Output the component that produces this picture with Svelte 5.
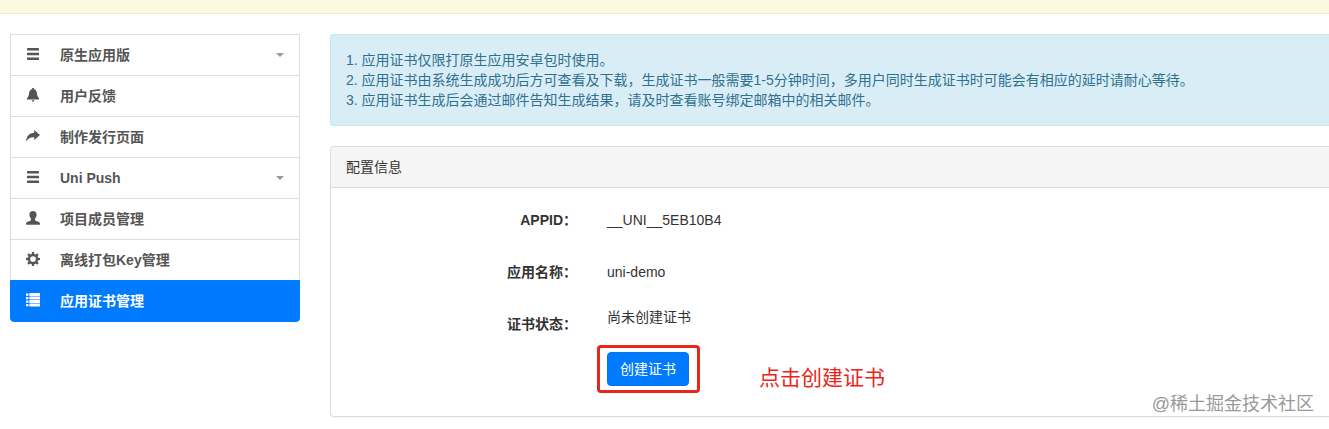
<script lang="ts">
  const menu = [
    { label: "原生应用版", icon: "bars", sub: true },
    { label: "用户反馈", icon: "bell" },
    { label: "制作发行页面", icon: "share" },
    { label: "Uni Push", icon: "bars", sub: true },
    { label: "项目成员管理", icon: "user" },
    { label: "离线打包Key管理", icon: "cog" },
    { label: "应用证书管理", icon: "list" },
  ];

  const notes = [
    "1. 应用证书仅限打原生应用安卓包时使用。",
    "2. 应用证书由系统生成成功后方可查看及下载，生成证书一般需要1-5分钟时间，多用户同时生成证书时可能会有相应的延时请耐心等待。",
    "3. 应用证书生成后会通过邮件告知生成结果，请及时查看账号绑定邮箱中的相关邮件。",
  ];

  let active = $state("应用证书管理");
</script>

{#snippet icon(name: string)}
  <svg class="icon" viewBox="0 0 14 14" aria-hidden="true">
    {#if name === "bars"}
      {#each [1, 5.7, 10.4] as y}
        <rect x="1" {y} width="12" height="2.6" rx="0.4" />
      {/each}
    {:else if name === "bell"}
      <path d="M7 0c.7 0 1.1.5 1.100 1.200C9.900 1.700 10.800 3.200 10.900 5c.1 2.200.6 3.600 2.100 5.200V11.500H1v-1.300C2.500 8.600 3 7.200 3.100 5c.1-1.800 1-3.300 2.800-3.800C5.900.5 6.300 0 7 0zM5.600 12.300h2.800c-.1.900-.7 1.500-1.400 1.500s-1.300-.6-1.400-1.500z" />
    {:else if name === "share"}
      <path d="M8.200 1 14 6 8.200 11.100V8.200C4.400 8.100 2.100 9 .1 12.400.3 7.400 3.300 4.200 8.200 3.800z" />
    {:else if name === "user"}
      <path d="M7 0c2.200 0 3.600 1.300 3.600 3.600 0 1.500-.5 2.900-1.500 3.900v1.400c0 .4.2.6.5.8l3.300 1.300c.7.3 1 .8 1 1.400v.8c0 .4-.2.6-.6.6H.7c-.4 0-.6-.2-.6-.6v-.8c0-.6.3-1.100 1-1.400l3.300-1.300c.3-.2.5-.4.5-.8V7.500c-1-1-1.500-2.400-1.500-3.900C3.400 1.300 4.800 0 7 0z" />
    {:else if name === "cog"}
      <circle cx="7" cy="7" r="4" fill="none" stroke="currentColor" stroke-width="2.3" />
      {#each [0, 45, 90, 135, 180, 225, 270, 315] as angle}
        <path d="M5.600 2.700 6 0h2l.4 2.700z" transform="rotate({angle} 7 7)" />
      {/each}
    {:else}
      {#each [0, 3.5, 7, 10.5] as y}
        <path d="M0 {y + 0.4}h2.500v2.300H0zM3.400 {y + 0.1}H14v2.800H3.400z" />
      {/each}
    {/if}
  </svg>
{/snippet}

<div class="topbar"></div>

<div class="page">
  <nav class="sidebar">
    {#each menu as item}
      <a
        href="#{item.icon}"
        class:active={item.label === active}
        onclick={(e) => {
          e.preventDefault();
          active = item.label;
        }}
      >
        {@render icon(item.icon)}
        <span>{item.label}</span>
        {#if item.sub}<i class="caret"></i>{/if}
      </a>
    {/each}
  </nav>

  <main>
    <div class="alert">
      {#each notes as note}
        <p>{note}</p>
      {/each}
    </div>

    <section class="panel">
      <h3>配置信息</h3>
      <dl>
        <dt>APPID：</dt>
        <dd class="static">__UNI__5EB10B4</dd>
        <dt>应用名称：</dt>
        <dd class="static">uni-demo</dd>
        <dt>证书状态：</dt>
        <dd>
          <div>尚未创建证书</div>
          <div class="action">
            <button type="button">创建证书</button>
            <span class="frame"></span>
            <span class="hint">点击创建证书</span>
          </div>
        </dd>
      </dl>
    </section>
  </main>
</div>

<div class="watermark">@稀土掘金技术社区</div>

<style>
  :global(body) {
    margin: 0;
    background: #fff;
    color: #333;
    font-family: "Liberation Sans", "Noto Sans CJK SC", sans-serif;
    font-size: 14px;
    line-height: 20px;
  }
  :global(#app) {
    position: relative;
    overflow: hidden;
  }
  .topbar {
    height: 13px;
    background: #fcf8e0;
    border-bottom: 1px solid #eeebcf;
  }
  .page {
    display: flex;
    align-items: flex-start;
    gap: 30px;
    padding: 20px 0 12px 10px;
  }

  .sidebar {
    flex: 0 0 290px;
  }
  .sidebar a {
    display: flex;
    align-items: center;
    padding: 10px 15px;
    margin-bottom: -1px;
    border: 1px solid #ddd;
    color: #555;
    font-weight: bold;
    text-decoration: none;
  }
  .sidebar a:last-child {
    margin-bottom: 0;
    border-radius: 0 0 4px 4px;
  }
  .sidebar a.active {
    position: relative;
    background: #007bff;
    border-color: #007bff;
    color: #fff;
  }
  .icon {
    width: 14px;
    height: 14px;
    margin: 0 20px 2px 0;
    fill: currentColor;
  }
  .caret {
    margin-left: auto;
    border: 4px solid transparent;
    border-top-color: #999;
    border-bottom: 0;
  }

  main {
    flex: 1;
    min-width: 0;
  }
  .alert {
    padding: 15px;
    margin-bottom: 20px;
    border: 1px solid #bce8f1;
    border-right: 0;
    border-radius: 4px 0 0 4px;
    background: #d9edf7;
    color: #31708f;
  }
  .alert p {
    margin: 0;
  }
  .panel {
    border: 1px solid #ddd;
    border-right: 0;
    border-radius: 4px 0 0 4px;
    box-shadow: 0 1px 1px rgba(0, 0, 0, 0.05);
  }
  .panel h3 {
    margin: 0;
    padding: 10px 15px;
    border-bottom: 1px solid #ddd;
    border-radius: 3px 0 0 0;
    background: #f5f5f5;
    font-size: 14px;
    font-weight: normal;
  }
  dl {
    display: grid;
    grid-template-columns: 246px 1fr;
    gap: 15px 30px;
    margin: 0;
    padding: 15px 15px 30px 0;
  }
  dt {
    padding-top: 7px;
    font-weight: bold;
    text-align: right;
  }
  dd {
    margin: 0;
  }
  .static {
    padding: 7px 0 10px;
  }
  .action {
    position: relative;
    width: max-content;
    margin-top: 25px;
  }
  button {
    display: block;
    padding: 6px 12px;
    border: 1px solid #0a74e6;
    border-radius: 4px;
    background: #007bff;
    color: #fff;
    font: inherit;
    cursor: pointer;
  }
  button:hover {
    background: #0069d9;
  }
  .frame {
    position: absolute;
    inset: -7px -11px -7px -10px;
    border: 3px solid #e8261b;
    border-radius: 4px;
    pointer-events: none;
  }
  .hint {
    position: absolute;
    top: 11px;
    left: 152px;
    color: #e8261b;
    font-size: 21px;
    line-height: 30px;
    white-space: nowrap;
  }
  .watermark {
    position: absolute;
    right: 15px;
    bottom: 12px;
    color: #999;
    font-size: 18px;
    line-height: 26px;
    text-shadow: 0 0 2px #fff;
  }
</style>
